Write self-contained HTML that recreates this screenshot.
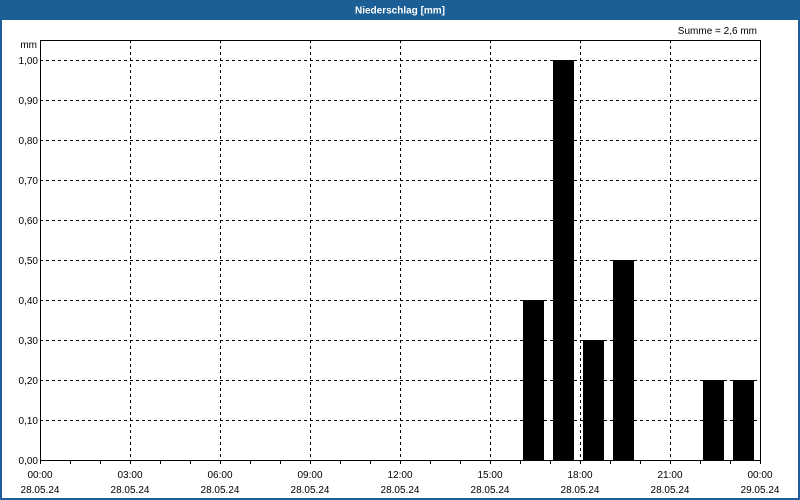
<!DOCTYPE html>
<html><head><meta charset="utf-8"><style>
html,body{margin:0;padding:0;background:#fff}
svg{display:block}
text{font-family:"Liberation Sans",sans-serif;font-size:10px;fill:#000}
</style></head><body>
<svg width="800" height="500" xmlns="http://www.w3.org/2000/svg">
<rect x="0" y="0" width="800" height="500" fill="#1c5f96"/>
<rect x="2" y="20" width="796" height="478" fill="#fff"/>
<text x="400" y="13.5" text-anchor="middle" style="fill:#fff;font-weight:bold;font-size:10px">Niederschlag [mm]</text>
<text x="757" y="34" text-anchor="end">Summe = 2,6 mm</text>
<text x="37" y="48" text-anchor="end">mm</text>
<g stroke="#000" stroke-width="1" stroke-dasharray="3,3" fill="none">
<path d="M40 60.5H760M40 100.5H760M40 140.5H760M40 180.5H760M40 220.5H760M40 260.5H760M40 300.5H760M40 340.5H760M40 380.5H760M40 420.5H760"/>
<path d="M130.5 40V460M220.5 40V460M310.5 40V460M400.5 40V460M490.5 40V460M580.5 40V460M670.5 40V460"/>
</g>
<g fill="#000">
<rect x="523" y="300" width="21" height="160"/>
<rect x="553" y="60" width="21" height="400"/>
<rect x="583" y="340" width="21" height="120"/>
<rect x="613" y="260" width="21" height="200"/>
<rect x="703" y="380" width="21" height="80"/>
<rect x="733" y="380" width="21" height="80"/>
</g>
<rect x="40.5" y="40.5" width="720" height="420" fill="none" stroke="#000"/>
<g stroke="#000">
<path d="M40.5 461v3M70.5 461v3M100.5 461v3M130.5 461v3M160.5 461v3M190.5 461v3M220.5 461v3M250.5 461v3M280.5 461v3M310.5 461v3M340.5 461v3M370.5 461v3M400.5 461v3M430.5 461v3M460.5 461v3M490.5 461v3M520.5 461v3M550.5 461v3M580.5 461v3M610.5 461v3M640.5 461v3M670.5 461v3M700.5 461v3M730.5 461v3M760.5 461v3"/>
</g>
<g text-anchor="end">
<text x="38" y="64">1,00</text><text x="38" y="104">0,90</text><text x="38" y="144">0,80</text><text x="38" y="184">0,70</text><text x="38" y="224">0,60</text><text x="38" y="264">0,50</text><text x="38" y="304">0,40</text><text x="38" y="344">0,30</text><text x="38" y="384">0,20</text><text x="38" y="424">0,10</text><text x="38" y="464">0,00</text>
</g>
<g text-anchor="middle">
<text x="40" y="478">00:00</text><text x="130" y="478">03:00</text><text x="220" y="478">06:00</text><text x="310" y="478">09:00</text><text x="400" y="478">12:00</text><text x="490" y="478">15:00</text><text x="580" y="478">18:00</text><text x="670" y="478">21:00</text><text x="760" y="478">00:00</text>
<text x="40" y="493">28.05.24</text><text x="130" y="493">28.05.24</text><text x="220" y="493">28.05.24</text><text x="310" y="493">28.05.24</text><text x="400" y="493">28.05.24</text><text x="490" y="493">28.05.24</text><text x="580" y="493">28.05.24</text><text x="670" y="493">28.05.24</text><text x="760" y="493">29.05.24</text>
</g>
</svg>
</body></html>
